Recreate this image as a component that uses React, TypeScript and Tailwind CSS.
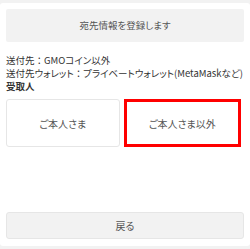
import React from 'react';

// colon keeps its full width, like the reference
const Colon: React.FC = () => <span className="[font-feature-settings:normal]">：</span>;

const App: React.FC = () => {
  return (
    <div
      className="w-[250px] h-[249px] bg-[#f2f2f2] pt-[3px] pb-[3px] [font-feature-settings:'palt']"
      style={{ fontFamily: '"Noto Sans CJK JP", "Noto Sans", sans-serif' }}
    >
      <div className="h-full bg-white rounded-[3px] px-[6px] pt-[6px] pb-[7px] flex flex-col text-[#333]">
        {/* register */}
        <button className="h-[33px] w-full bg-[#f2f2f2] rounded-[2px] text-[9.5px] text-[#555] flex items-center justify-center">
          宛先情報を登録します
        </button>

        <div className="mt-[12px] text-[9.5px] leading-[13px] whitespace-nowrap">
          <p>送付先<Colon />GMOコイン以外</p>
          <p>送付先ウォレット<Colon />プライベートウォレット(MetaMaskなど)</p>
          <p className="font-bold">受取人</p>
        </div>

        <div className="mt-[6px] flex gap-[4px] pr-[3px]">
          <button className="flex-1 h-[48px] bg-white border border-[#e6e6e6] rounded-[3px] text-[10px] text-[#555]">
            ご本人さま
          </button>
          <button className="flex-1 h-[48px] bg-white border-[3px] border-[#ff0000] text-[10px] text-[#555]">
            ご本人さま以外
          </button>
        </div>

        <div className="flex-1" />

        <button className="h-[27px] w-full bg-[#f2f2f2] border border-[#e6e6e6] rounded-[3px] text-[10px] text-[#555]">
          戻る
        </button>
      </div>
    </div>
  );
};

export default App;
